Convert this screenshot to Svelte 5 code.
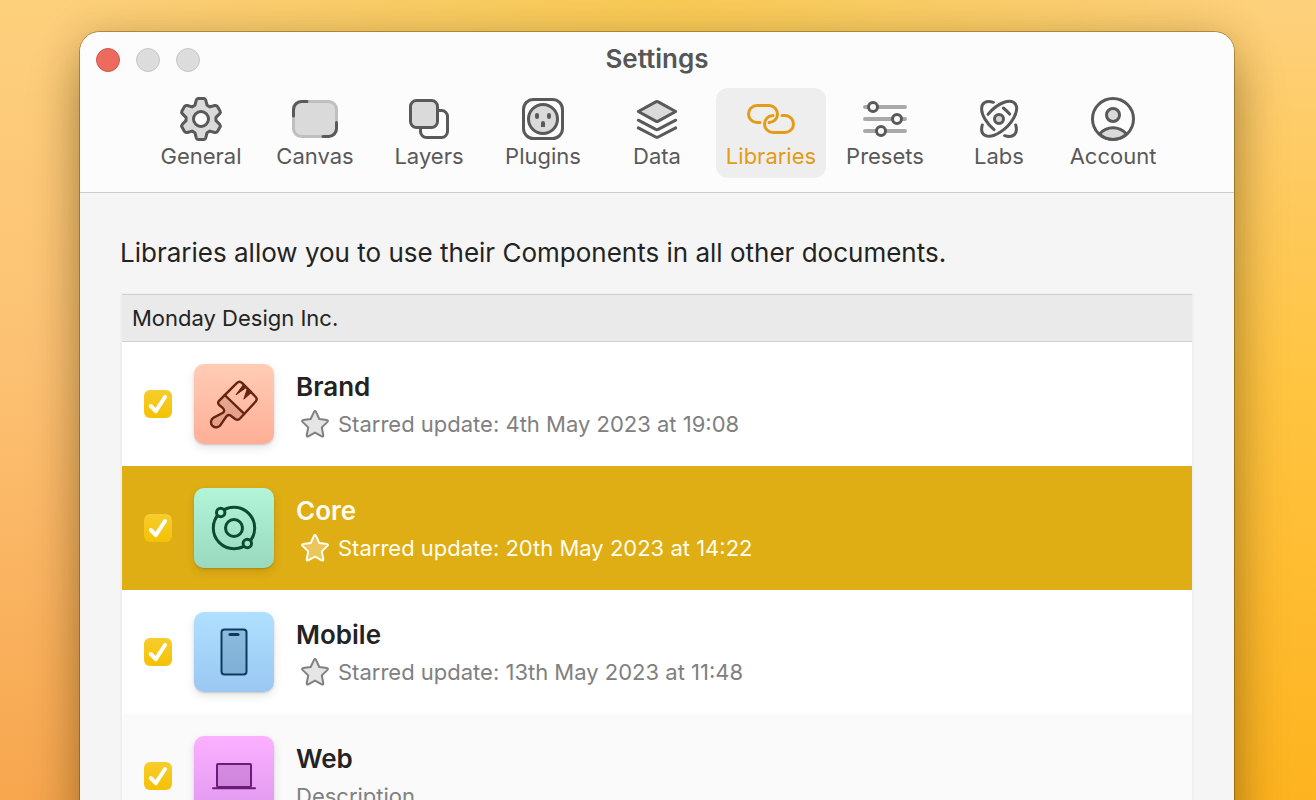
<script>
  const tabs = ['General', 'Canvas', 'Layers', 'Plugins', 'Data', 'Libraries', 'Presets', 'Labs', 'Account'];
  let active = $state('Libraries');
  let selected = $state('core');

  let libraries = $state([
    { id: 'brand', name: 'Brand', starred: '4th May 2023 at 19:08', enabled: true },
    { id: 'core', name: 'Core', starred: '20th May 2023 at 14:22', enabled: true },
    { id: 'mobile', name: 'Mobile', starred: '13th May 2023 at 11:48', enabled: true },
    { id: 'web', name: 'Web', description: 'Description', enabled: true }
  ]);

  // Six-toothed cog: each tooth is one outline turned by 60 degrees.
  function cog() {
    const at = (x, y, k) => {
      const a = (k * Math.PI) / 3;
      return `${(x * Math.cos(a) - y * Math.sin(a)).toFixed(2)},${(x * Math.sin(a) + y * Math.cos(a)).toFixed(2)}`;
    };
    let d = '';
    for (let k = 0; k < 6; k++) {
      d += `${k ? 'L' : 'M'}${at(-6, -13.8, k)} L${at(-4.8, -18.6, k)} Q${at(-4.2, -20.5, k)} ${at(-2.6, -20.5, k)} `;
      d += `L${at(2.6, -20.5, k)} Q${at(4.2, -20.5, k)} ${at(4.8, -18.6, k)} L${at(6, -13.8, k)} `;
    }
    return d + 'Z';
  }
</script>

{#snippet tabIcon(name)}
  <svg class="glyph" viewBox="-24 -24 48 48" aria-hidden="true">
    {#if name === 'General'}
      <path class="fill" d={cog()} />
      <circle class="paper" r="7.5" />
    {:else if name === 'Canvas'}
      <rect class="fill faint" x="-21.5" y="-17.5" width="43" height="35" rx="8" />
      <path d="M-21.5-3V-9.5a8 8 0 0 1 8-8H-8M21.5 3.500V9.500a8 8 0 0 1-8 8H8" />
    {:else if name === 'Layers'}
      <path d="M9-8.500h3.500a6 6 0 0 1 6 6v15a6 6 0 0 1-6 6h-15a6 6 0 0 1-6-6V9" />
      <rect class="fill" x="-18.5" y="-18.5" width="27" height="27" rx="6" />
    {:else if name === 'Plugins'}
      <rect x="-19.5" y="-19.5" width="39" height="39" rx="10" />
      <circle class="fill" r="14.5" />
      <path class="solid" d="M-8-4a2 2 0 0 1 4 0v2a2 2 0 0 1-4 0zM4-4a2 2 0 0 1 4 0v2a2 2 0 0 1-4 0zM-2 4a2 2 0 0 1 4 0v4h-4z" />
    {:else if name === 'Data'}
      <path class="fill" d="M-1.200-17.100Q0-17.800 1.200-17.100L18.700-7.500 1.200 2.100Q0 2.800-1.200 2.100L-18.700-7.500z" />
      <path d="M-18.700 1.200-1.200 10.300Q0 11 1.200 10.300L18.700 1.200M-18.700 8.900-1.200 18Q0 18.700 1.200 18L18.700 8.900" />
    {:else if name === 'Libraries'}
      <path d="M-11 3.500H-14a8.500 8.500 0 0 1 0-17H-2a8.500 8.500 0 0 1 0 17H-1.500" />
      <path d="M11-3.500H14a8.500 8.500 0 0 1 0 17H2a8.500 8.500 0 0 1 0-17H1.500" />
    {:else if name === 'Presets'}
      <path class="rail" d="M-20-12H20M-20 0H20M-20 12H20" />
      <circle class="paper" cx="-12" cy="-12" r="4.500" />
      <circle class="paper" cx="12" cy="0" r="4.500" />
      <circle class="paper" cx="-4" cy="12" r="4.500" />
    {:else if name === 'Labs'}
      <path transform="rotate(-45)" d="M-4.500-11A22 11.200 0 1 1-16-7.600" />
      <path transform="rotate(45)" d="M4 11A22 11.200 0 0 1-15.800-7.800M-4.700-10.900A22 11.200 0 0 1 4-11M16-7.600A22 11.200 0 0 1 15.800 7.800" />
      <circle class="fill" r="4.500" />
    {:else}
      <path class="fill" d="M-13.700 15.200C-6 6.700 6 6.700 13.700 15.200A20.500 20.500 0 0 1-13.700 15.200z" />
      <circle r="20.500" />
      <circle class="fill" cy="-4" r="6.500" />
    {/if}
  </svg>
{/snippet}

{#snippet tile(id)}
  <svg class="tile {id}" viewBox="-40 -40 80 80" aria-hidden="true">
    {#if id === 'brand'}
      <path class="shade" d="M-9.300-9 9 8.700 4 16-4 11-12 20-19 23-22 17-10 8-9 4-16-2z" />
      <path d="M3-21.200-15-3.200Q-16.800-1-14.800 1L-11 4.200Q-8.500 7-11.500 9L-20.300 13.600A5.200 5.200 0 1 0-13.200 20.600L-8 12.800Q-5.500 9.800-2.800 12L1.500 15.200Q4 16.500 6 14.500L21.700-2.500Q23.700-5 21.700-7L8-21.200Q5.500-23.500 3-21.200z" />
      <path d="M-9.300-9 9 8.700" />
      <path class="ink" d="M9.500-19.500 2-9.200 11.300-15.800zM13.500-16 9.800-4.800 17.800-11.800z" />
    {:else if id === 'core'}
      <g class="heavy">
        <circle r="20.700" />
        <circle r="8.500" />
        <circle class="mint-top" cx="-13.300" cy="-15.500" r="4.200" />
        <circle class="mint-low" cx="13.300" cy="15.500" r="4.200" />
      </g>
    {:else if id === 'mobile'}
      <rect class="shade" x="-12.500" y="-22.500" width="25" height="45" rx="3" />
      <rect x="-12.500" y="-22.500" width="25" height="45" rx="3" />
      <path class="slot" d="M-4-17.500H4" />
    {:else}
      <rect class="shade" x="-17" y="-12" width="34" height="23" rx="1" />
      <rect x="-17" y="-12" width="34" height="23" rx="1" />
      <path d="M-21 12.300H21" />
    {/if}
  </svg>
{/snippet}

<div class="desktop">
  <main class="window">
    <header>
      <div class="titlebar">
        <div class="lights">
          <button class="close" aria-label="Close"></button>
          <button aria-label="Minimise"></button>
          <button aria-label="Zoom"></button>
        </div>
        <h1>Settings</h1>
      </div>
      <nav>
        {#each tabs as name}
          <button class="tab" class:active={active === name} onclick={() => (active = name)}>
            {@render tabIcon(name)}
            <span>{name}</span>
          </button>
        {/each}
      </nav>
    </header>

    <section>
      <p class="intro">Libraries allow you to use their Components in all other documents.</p>
      <div class="list">
        <h2>Monday Design Inc.</h2>
        <ul>
          {#each libraries as lib}
            <li class:selected={selected === lib.id}>
              <div class="check">
                <input id="lib-{lib.id}" type="checkbox" bind:checked={lib.enabled} />
                {#if lib.enabled}
                  <svg viewBox="-14 -14 28 28" aria-hidden="true"><path d="M-7.200 2-2.200 7.200 7-7" /></svg>
                {/if}
              </div>
              {@render tile(lib.id)}
              <div class="info">
                <label for="lib-{lib.id}">{lib.name}</label>
                {#if lib.starred}
                  <p class="starred">
                    <svg viewBox="-15 -15 30 30" aria-hidden="true">
                      <path d="M-1-12.200Q0-13.800 1-12.200L4.300-5 12-3.900Q13.600-3.400 12.500-2.100L6.800 3.400 8.300 11.300Q8.400 13 6.800 12.300L0 8.600-6.800 12.300Q-8.400 13-8.300 11.300L-6.800 3.400-12.500-2.100Q-13.600-3.400-12-3.900L-4.300-5z" />
                    </svg>
                    <span>Starred update: {lib.starred}</span>
                  </p>
                {:else}
                  <p>{lib.description}</p>
                {/if}
              </div>
            </li>
          {/each}
        </ul>
      </div>
    </section>
  </main>
</div>

<style>
  :global(body) {
    margin: 0;
  }
  .desktop {
    box-sizing: border-box;
    height: 100vh;
    padding: 32px 82px 0 80px;
    overflow: hidden;
    font-family: Inter, 'Liberation Sans', sans-serif;
    color: #232323;
    background:
      radial-gradient(ellipse 46% 30% at 50% 0, #f9cb55 0, rgba(249, 203, 85, 0) 100%),
      linear-gradient(to bottom, #fdd07c 0, #ffc441 48%, #fdb31f 100%) 100% 0 / 50% 100% no-repeat,
      linear-gradient(to bottom, #fdd07c 0, #fcc173 45%, #f7a64e 100%) 0 0 / 50% 100% no-repeat;
  }
  .window {
    min-height: 960px;
    border-radius: 20px;
    background: #f5f5f5;
    box-shadow:
      0 0 0 1px rgba(90, 60, 0, 0.4),
      0 0 40px rgba(80, 60, 0, 0.2),
      0 32px 50px rgba(60, 40, 0, 0.36);
    overflow: hidden;
  }
  header {
    background: #fcfcfc;
    border-bottom: 1px solid #cbcbcb;
    padding-bottom: 14px;
  }
  .titlebar {
    display: grid;
    grid-template-columns: 1fr auto 1fr;
    align-items: center;
    height: 56px;
    padding: 0 16px;
  }
  .lights {
    display: flex;
    gap: 16px;
  }
  .lights button {
    width: 24px;
    height: 24px;
    padding: 0;
    border: 1px solid #c6c6c6;
    border-radius: 50%;
    background: #dcdcdc;
  }
  .lights .close {
    border-color: #cf584d;
    background: #ec6a5e;
  }
  h1 {
    margin: 0;
    padding-bottom: 2px;
    font-size: 26px;
    line-height: 32px;
    font-weight: 600;
    color: #565656;
  }
  nav {
    display: flex;
    justify-content: center;
    gap: 4px;
  }
  .tab {
    display: flex;
    flex-direction: column;
    align-items: center;
    width: 110px;
    height: 90px;
    padding: 7px 0;
    border: 0;
    border-radius: 12px;
    background: none;
    color: #595959;
    font: inherit;
    font-size: 22px;
    line-height: 26px;
  }
  .tab.active {
    background: #eeeeee;
    color: #e39b18;
  }
  .glyph {
    flex: none;
    width: 48px;
    height: 48px;
    fill: none;
    stroke: currentColor;
    stroke-width: 3;
    stroke-linecap: round;
    stroke-linejoin: round;
  }
  .glyph .fill {
    fill: #dadada;
  }
  .glyph .faint {
    stroke: #bfbfbf;
  }
  .glyph .paper {
    fill: #fcfcfc;
  }
  .glyph .solid {
    fill: currentColor;
    stroke: none;
  }
  .glyph .rail {
    stroke: #a9a9a9;
    stroke-width: 4;
  }
  section {
    padding: 44px 40px 0;
  }
  p {
    margin: 0;
  }
  .intro {
    font-size: 26px;
    line-height: 32px;
  }
  .list {
    margin-top: 24px;
    border: 2px solid #efefef;
    border-top-width: 1px;
    background: #fafafa;
  }
  h2 {
    margin: 0;
    padding: 0 10px;
    border: 1px solid #d0d0d0;
    border-width: 1px 0;
    background: #eaeaea;
    font-size: 22px;
    line-height: 46px;
    font-weight: 400;
  }
  ul {
    margin: 0;
    padding: 0;
    list-style: none;
  }
  li {
    display: flex;
    align-items: center;
    box-sizing: border-box;
    height: 124px;
    padding: 0 22px;
    background: #ffffff;
  }
  li:nth-child(4) {
    background: #fafafa;
  }
  .check {
    display: grid;
    width: 28px;
    height: 28px;
    margin-right: 22px;
  }
  .check > * {
    grid-area: 1 / 1;
  }
  .check input {
    appearance: none;
    width: 28px;
    height: 28px;
    margin: 0;
    border: 1px solid #cccccc;
    border-radius: 6px;
    background: #ffffff;
  }
  .check input:checked {
    border: 0;
    background: linear-gradient(#f7cd2d, #f4c204);
  }
  .check svg {
    pointer-events: none;
    fill: none;
    stroke: #ffffff;
    stroke-width: 4;
    stroke-linecap: round;
    stroke-linejoin: round;
  }
  .tile {
    flex: none;
    width: 80px;
    height: 80px;
    margin-right: 22px;
    border-radius: 10px;
    box-shadow:
      0 1px 2px rgba(0, 0, 0, 0.16),
      0 4px 10px rgba(0, 0, 0, 0.1);
    fill: none;
    stroke: currentColor;
    stroke-width: 2;
    stroke-linecap: round;
    stroke-linejoin: round;
  }
  .tile .shade {
    fill: currentColor;
    fill-opacity: 0.2;
    stroke: none;
  }
  .tile .ink {
    fill: currentColor;
    stroke-width: 1;
  }
  .tile .heavy {
    stroke-width: 3;
  }
  .tile .slot {
    stroke-width: 3;
  }
  .brand {
    color: #64240f;
    background: linear-gradient(#ffccb5, #ffae97);
  }
  .brand .shade {
    fill-opacity: 0.16;
  }
  .core {
    color: #0d4a30;
    background: linear-gradient(#b2f5d8, #99d9bd);
  }
  .mint-top {
    fill: #adefd2;
  }
  .mint-low {
    fill: #a0e2c5;
  }
  .mobile {
    color: #0c3a5e;
    background: linear-gradient(#b0e0ff, #99c7f2);
  }
  .web {
    color: #6b1b78;
    background: linear-gradient(#fcb0ff, #de98ef);
  }
  .info {
    display: flex;
    flex-direction: column;
    gap: 5px;
    padding-top: 3px;
    color: #808080;
    font-size: 22px;
    line-height: 32px;
  }
  .info label {
    color: #232323;
    font-size: 26px;
    font-weight: 600;
  }
  .starred {
    display: flex;
    align-items: center;
    gap: 8px;
    padding-left: 4px;
  }
  .starred svg {
    width: 30px;
    height: 30px;
    fill: #e5e5e5;
    stroke: currentColor;
    stroke-width: 2;
    stroke-linejoin: round;
  }
  .brand,
  .brand path {
    stroke-width: 2.4;
  }
  .selected {
    background: #dfad14;
  }
  .selected .info,
  .selected .info label {
    color: #fffdf0;
  }
  .selected .starred svg {
    fill: #eac65c;
  }
</style>
